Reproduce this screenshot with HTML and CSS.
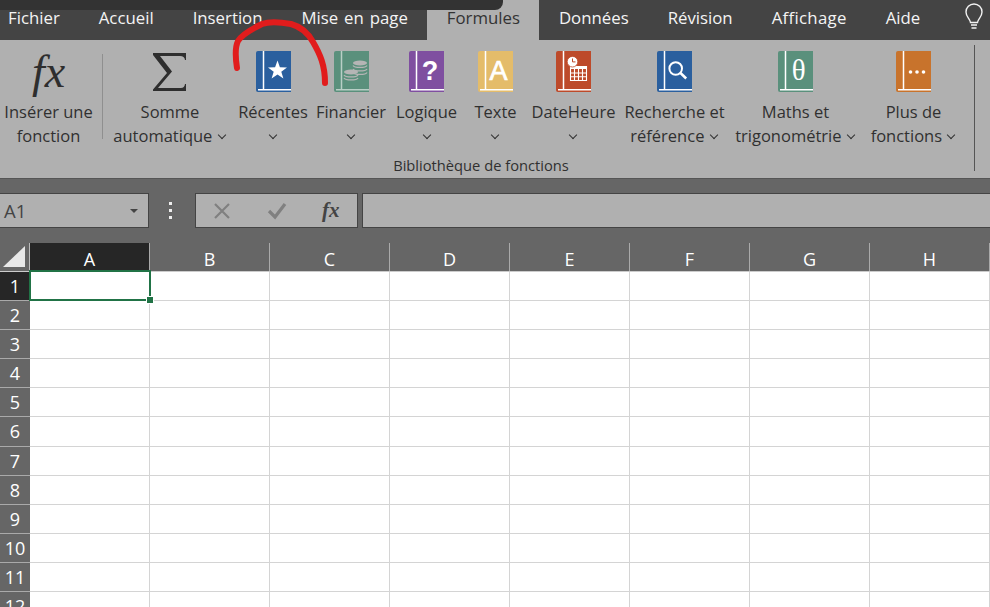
FILE: index.html
```html
<!DOCTYPE html>
<html lang="fr">
<head>
    <meta charset="UTF-8">
    <meta name="viewport" content="width=device-width, initial-scale=1.0">
    <title>Formules</title>
    <link rel="stylesheet" href="styles.css">
</head>
<body>

    <div class="window">
        <div class="titlebar-edge"></div>

        <nav class="tabs">
            <span class="tab tab-fichier">Fichier</span>
            <span class="tab">Accueil</span>
            <span class="tab">Insertion</span>
            <span class="tab tab-mise">Mise en page</span>
            <span class="tab tab-formules">Formules</span>
            <span class="tab">Données</span>
            <span class="tab">Révision</span>
            <span class="tab tab-affichage">Affichage</span>
            <span class="tab">Aide</span>
            <svg class="bulb" width="20" height="30" viewBox="0 0 20 30">
                <path d="M6.500 19.500C6 15.500 2 14 2 9a8 8 0 0 1 16 0c0 5-4 6.500-4.500 10.500z" fill="none" stroke="#f2f2f2" stroke-width="1.400"/>
                <path d="M7 22h6M7.500 25h5" stroke="#f2f2f2" stroke-width="1.600"/>
            </svg>
        </nav>

        <section class="ribbon">
            <div class="tool tool-fx">
                <div class="tool-icon fx-icon">fx</div>
                <div class="tool-label">Insérer une<br>fonction</div>
            </div>
            <div class="ribbon-sep"></div>

            <div class="library">
                <div class="library-tools">
                    <div class="tool tool-somme">
                        <div class="tool-icon">
                            <svg width="34" height="41" viewBox="0 0 34 41"><path d="M0 2H33V9H32Q31.500 5 27 5H7L19 20.500 5 37H28Q31.500 37 32 33H33V40H0V38.500L14 22 0 4z" fill="#2e2e2e"/></svg>
                        </div>
                        <div class="tool-label">Somme<br>automatique <span class="chev"></span></div>
                    </div>

                    <div class="tool tool-recentes">
                        <div class="tool-icon">
                            <svg width="35" height="41" viewBox="0 0 35 41">
                                <path d="M2 0h33v41H2a2 2 0 0 1-2-2V2a2 2 0 0 1 2-2z" fill="#2a5f9e"/>
                                <path d="M7.500 0v38M2 38.800h33" stroke="#fff" stroke-width="1.500"/>
                                <path d="M21.500 9.500l2.400 6.800 7.100.1-5.700 4.300 2.100 6.900-5.900-4.100-5.900 4.100 2.100-6.900-5.700-4.300 7.100-.1z" fill="#fff"/>
                            </svg>
                        </div>
                        <div class="tool-label">Récentes<br><span class="chev"></span></div>
                    </div>

                    <div class="tool tool-financier">
                        <div class="tool-icon">
                            <svg width="35" height="41" viewBox="0 0 35 41">
                                <path d="M2 0h33v41H2a2 2 0 0 1-2-2V2a2 2 0 0 1 2-2z" fill="#5a907c"/>
                                <path d="M7.500 0v38M2 38.800h33" stroke="#b9cfc6" stroke-width="1.500"/>
                                <ellipse cx="26" cy="12" rx="7" ry="2.500" fill="#b5b5b5"/>
                                <path d="M19 14.500c1.500 2.600 12.500 2.600 14 0M19 18c1.500 2.600 12.500 2.600 14 0M19 21.500c1.500 2.600 12.500 2.600 14 0" fill="none" stroke="#b5b5b5" stroke-width="1.300"/>
                                <ellipse cx="17" cy="21" rx="7" ry="2.500" fill="#b5b5b5"/>
                                <path d="M10 24c1.500 2.600 12.500 2.600 14 0M10 27c1.500 2.600 12.500 2.600 14 0" fill="none" stroke="#b5b5b5" stroke-width="1.300"/>
                            </svg>
                        </div>
                        <div class="tool-label">Financier<br><span class="chev"></span></div>
                    </div>

                    <div class="tool tool-logique">
                        <div class="tool-icon">
                            <svg width="35" height="41" viewBox="0 0 35 41">
                                <path d="M2 0h33v41H2a2 2 0 0 1-2-2V2a2 2 0 0 1 2-2z" fill="#7f4fa0"/>
                                <path d="M7.500 0v38M2 38.800h33" stroke="#fff" stroke-width="1.500"/>
                                <text class="book-glyph" x="21" y="29" font-size="27">?</text>
                            </svg>
                        </div>
                        <div class="tool-label">Logique<br><span class="chev"></span></div>
                    </div>

                    <div class="tool tool-texte">
                        <div class="tool-icon">
                            <svg width="35" height="41" viewBox="0 0 35 41">
                                <path d="M2 0h33v41H2a2 2 0 0 1-2-2V2a2 2 0 0 1 2-2z" fill="#e4bc6a"/>
                                <path d="M7.500 0v38M2 38.800h33" stroke="#fff" stroke-width="1.500"/>
                                <text class="book-glyph glyph-a" x="20.500" y="29" font-size="27">A</text>
                            </svg>
                        </div>
                        <div class="tool-label">Texte<br><span class="chev"></span></div>
                    </div>

                    <div class="tool tool-date">
                        <div class="tool-icon">
                            <svg width="35" height="41" viewBox="0 0 35 41">
                                <path d="M2 0h33v41H2a2 2 0 0 1-2-2V2a2 2 0 0 1 2-2z" fill="#bd4a2a"/>
                                <path d="M7.500 0v38M2 38.800h33" stroke="#fff" stroke-width="1.500"/>
                                <path d="M14.500 15h16v3h-16z" fill="#fff"/>
                                <path d="M14.500 15.500h16v14h-16zM14.500 22h16M14.500 25.800h16M18.500 15.500v14M22.500 15.500v14M26.500 15.500v14" fill="none" stroke="#fff" stroke-width="1.100"/>
                                <circle cx="16.500" cy="10.700" r="5.300" fill="#fff" stroke="#bd4a2a" stroke-width=".8"/>
                                <path d="M16.500 7.500v3.400h3" fill="none" stroke="#bd4a2a" stroke-width="1"/>
                            </svg>
                        </div>
                        <div class="tool-label">DateHeure<br><span class="chev"></span></div>
                    </div>

                    <div class="tool tool-recherche">
                        <div class="tool-icon">
                            <svg width="35" height="41" viewBox="0 0 35 41">
                                <path d="M2 0h33v41H2a2 2 0 0 1-2-2V2a2 2 0 0 1 2-2z" fill="#2a5f9e"/>
                                <path d="M7.500 0v38M2 38.800h33" stroke="#fff" stroke-width="1.500"/>
                                <circle cx="18.700" cy="17.500" r="6.300" fill="none" stroke="#fff" stroke-width="2"/>
                                <path d="M23.500 22l5.700 5.500" stroke="#fff" stroke-width="2.500"/>
                            </svg>
                        </div>
                        <div class="tool-label">Recherche et<br>référence <span class="chev"></span></div>
                    </div>

                    <div class="tool tool-maths">
                        <div class="tool-icon">
                            <svg width="35" height="41" viewBox="0 0 35 41">
                                <path d="M2 0h33v41H2a2 2 0 0 1-2-2V2a2 2 0 0 1 2-2z" fill="#5a907c"/>
                                <path d="M7.500 0v38M2 38.800h33" stroke="#fff" stroke-width="1.500"/>
                                <text class="book-glyph theta" x="20.700" y="29" font-size="29">θ</text>
                            </svg>
                        </div>
                        <div class="tool-label">Maths et<br>trigonométrie <span class="chev"></span></div>
                    </div>

                    <div class="tool tool-plus">
                        <div class="tool-icon">
                            <svg width="35" height="41" viewBox="0 0 35 41">
                                <path d="M2 0h33v41H2a2 2 0 0 1-2-2V2a2 2 0 0 1 2-2z" fill="#c8732c"/>
                                <path d="M7.500 0v38M2 38.800h33" stroke="#fff" stroke-width="1.500"/>
                                <circle cx="14.500" cy="21" r="1.800" fill="#fff"/>
                                <circle cx="21" cy="21" r="1.800" fill="#fff"/>
                                <circle cx="27.500" cy="21" r="1.800" fill="#fff"/>
                            </svg>
                        </div>
                        <div class="tool-label">Plus de<br>fonctions <span class="chev"></span></div>
                    </div>
                </div>
                <div class="group-label">Bibliothèque de fonctions</div>
            </div>
            <div class="ribbon-sep-end"></div>
        </section>

        <section class="formula-bar">
            <div class="name-box">A1<span class="caret"></span></div>
            <div class="dots"><i></i><i></i><i></i></div>
            <div class="formula-btns">
                <svg width="18" height="18" viewBox="0 0 18 18"><path d="M2 2l14 14M16 2L2 16" stroke="#808080" stroke-width="2.200"/></svg>
                <svg width="20" height="18" viewBox="0 0 20 18"><path d="M2 9l6 6L18 2" fill="none" stroke="#808080" stroke-width="3.200"/></svg>
                <span class="fx-small">fx</span>
            </div>
            <div class="formula-input"></div>
        </section>

        <div class="col-headers">
            <div class="corner"><svg width="22" height="21" viewBox="0 0 22 21"><path d="M22 0v21H0z" fill="#e8e8e8"/></svg></div>
            <div class="col col-active">A</div>
            <div class="col">B</div>
            <div class="col">C</div>
            <div class="col">D</div>
            <div class="col">E</div>
            <div class="col">F</div>
            <div class="col">G</div>
            <div class="col">H</div>
        </div>

        <div class="sheet">
            <div class="row-headers">
                <div class="row row-active">1</div>
                <div class="row">2</div>
                <div class="row">3</div>
                <div class="row">4</div>
                <div class="row">5</div>
                <div class="row">6</div>
                <div class="row">7</div>
                <div class="row">8</div>
                <div class="row">9</div>
                <div class="row">10</div>
                <div class="row">11</div>
                <div class="row">12</div>
            </div>
            <div class="cells">
                <div class="selected-cell"><span class="fill-handle"></span></div>
            </div>
        </div>

        <svg class="scribble" width="990" height="607" viewBox="0 0 990 607">
            <path d="M237 68C235 55 236 45 238 41C243 33 256 27 262 24C270 21 280 22 291 24C302 27 308 33 313 42C320 54 325 65 325 83" fill="none" stroke="#e11c1c" stroke-width="6" stroke-linecap="round" stroke-linejoin="round"/>
        </svg>
    </div>

</body>
</html>
```

FILE: styles.css
```css
* {
    box-sizing: border-box;
}
html, body {
    margin: 0;
    height: 100%;
    overflow: hidden;
}
body {
    font-family: 'Open Sans', 'Noto Sans', sans-serif;
    background-color: #fff;
}
.window {
    position: relative;
    width: 990px;
    height: 607px;
    overflow: hidden;
}
.titlebar-edge {
    position: absolute;
    top: 0;
    left: 0;
    z-index: 2;
    width: 503px;
    height: 10px;
    background-color: #333;
    border-bottom-right-radius: 8px;
}

/* tabs */
.tabs {
    display: flex;
    height: 40px;
    background-color: #444;
    color: #f4f4f4;
    font-size: 16.800px;
    line-height: 35px;
}
.tab {
    padding: 0 19.500px;
    white-space: nowrap;
}
.tab-fichier {
    padding-left: 8px;
}
.tab-mise {
    word-spacing: 1.500px;
}
.tab-formules {
    background-color: #b0b0b0;
    color: #333;
}
.tab-affichage {
    letter-spacing: .3px;
}
.bulb {
    position: absolute;
    top: 3px;
    left: 964px;
}

/* ribbon */
.ribbon {
    display: flex;
    height: 139px;
    background-color: #b0b0b0;
    border-bottom: 1px solid #555;
    color: #303030;
}
.tool {
    flex: none;
    display: flex;
    flex-direction: column;
    align-items: center;
    padding-top: 11px;
}
.tool-icon {
    height: 41px;
    display: flex;
    justify-content: center;
    align-items: center;
}
.tool-label {
    margin-top: 8px;
    font-size: 16.500px;
    line-height: 24px;
    text-align: center;
    white-space: nowrap;
}
.tool-fx { width: 97px; }
.fx-icon {
    font-family: 'Liberation Serif', serif;
    font-style: italic;
    font-size: 46px;
    color: #2e2e2e;
}
.ribbon-sep {
    flex: none;
    width: 1px;
    height: 85px;
    margin: 14px 0 0 5px;
    background-color: #8f8f8f;
}
.library {
    flex: none;
    width: 871px;
}
.library-tools {
    display: flex;
    height: 115px;
}
.tool-somme { width: 134px; }
.tool-recentes { width: 72px; }
.tool-financier { width: 84px; }
.tool-logique { width: 67px; }
.tool-texte { width: 71px; }
.tool-date { width: 85px; }
.tool-recherche { width: 117px; }
.tool-maths { width: 125px; }
.tool-plus { width: 111px; }
.chev {
    display: inline-block;
    width: 6px;
    height: 6px;
    margin: 0 2px 4px 2px;
    border-right: 1.500px solid #303030;
    border-bottom: 1.500px solid #303030;
    transform: rotate(45deg);
}
.book-glyph {
    font-family: 'Liberation Sans', sans-serif;
    font-weight: bold;
    fill: #fff;
    text-anchor: middle;
}
.glyph-a {
    font-weight: normal;
    stroke: #fff;
    stroke-width: .7px;
}
.theta {
    font-family: 'Liberation Serif', serif;
    font-weight: normal;
}
.group-label {
    width: 756px;
    font-size: 14.700px;
    line-height: 21px;
    text-align: center;
}
.ribbon-sep-end {
    flex: none;
    width: 1px;
    height: 126px;
    margin-top: 5px;
    background-color: #555;
}

/* formula bar */
.formula-bar {
    display: flex;
    align-items: center;
    height: 64px;
    padding-bottom: 1px;
    background-color: #666;
}
.name-box {
    display: flex;
    justify-content: space-between;
    align-items: center;
    width: 149px;
    height: 35px;
    padding: 0 10px 0 4px;
    background-color: #b0b0b0;
    border: 1px solid #444;
    border-left: none;
    color: #444;
    font-size: 18.500px;
}
.caret {
    border-left: 4px solid transparent;
    border-right: 4px solid transparent;
    border-top: 4px solid #444;
}
.dots {
    display: flex;
    flex-direction: column;
    gap: 4px;
    width: 46px;
    padding-left: 20px;
}
.dots i {
    width: 3px;
    height: 3px;
    background-color: #eee;
}
.formula-btns {
    display: flex;
    align-items: center;
    width: 163px;
    height: 35px;
    padding-left: 17px;
    gap: 36px;
    background-color: #b0b0b0;
    border: 1px solid #444;
}
.fx-small {
    margin-left: -1px;
    font-family: 'Liberation Serif', serif;
    font-style: italic;
    font-weight: bold;
    font-size: 21px;
    color: #444;
}
.formula-input {
    flex: 1;
    height: 35px;
    margin-left: 4px;
    background-color: #b0b0b0;
    border: 1px solid #444;
    border-right: none;
}

/* sheet */
.col-headers {
    display: flex;
    height: 28px;
    background-color: #666;
    color: #fff;
    font-size: 18px;
}
.corner {
    flex: none;
    width: 30px;
    display: flex;
    justify-content: flex-end;
    align-items: flex-end;
    padding: 0 4px 4px 0;
    border-right: 1px solid #bbb;
}
.col {
    flex: none;
    width: 120px;
    line-height: 32px;
    text-align: center;
    border-right: 1px solid #aaa;
}
.col-active {
    background-color: #262626;
}
.sheet {
    display: flex;
    border-top: 1px solid #ccc;
}
.row-headers {
    flex: none;
    width: 30px;
    background-color: #666;
    color: #fff;
    font-size: 18px;
}
.row {
    height: 29.100px;
    line-height: 29px;
    text-align: center;
    border-bottom: 1px solid #aaa;
}
.row-active {
    background-color: #262626;
}
.cells {
    position: relative;
    flex: 1;
    background-color: #fff;
    background-image:
        repeating-linear-gradient(to right, transparent 0 119px, #d4d4d4 119px 120px),
        repeating-linear-gradient(to bottom, transparent 0 28.100px, #d4d4d4 28.100px 29.100px);
}
.selected-cell {
    position: absolute;
    top: -2px;
    left: -1px;
    width: 122px;
    height: 31px;
    border: 2px solid #217346;
}
.fill-handle {
    position: absolute;
    right: -4px;
    bottom: -4px;
    width: 6px;
    height: 6px;
    background-color: #217346;
    outline: 1px solid #fff;
}
.scribble {
    position: absolute;
    top: 0;
    left: 0;
    pointer-events: none;
}
```
